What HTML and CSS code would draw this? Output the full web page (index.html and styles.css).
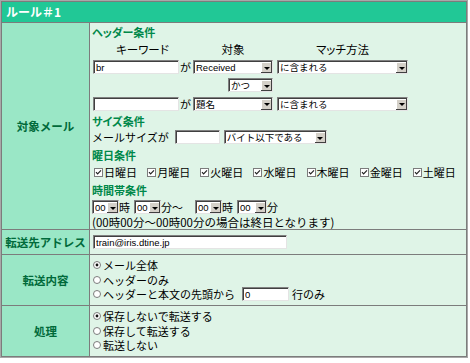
FILE: index.html
```html
<!DOCTYPE html>
<html lang="ja">
<head>
    <meta charset="UTF-8">
    <meta name="viewport" content="width=device-width, initial-scale=1.0">
    <title>ルール＃1</title>
    <link rel="stylesheet" href="styles.css">
</head>
<body>
    <table class="rule">
        <colgroup>
            <col class="col-label">
            <col class="col-body">
        </colgroup>
        <tr>
            <th class="title" colspan="2">ルール＃1</th>
        </tr>
        <tr>
            <td class="label">対象メール</td>
            <td class="body main">
                <div class="sec s1">ヘッダー条件</div>
                <div class="hrow heads">
                    <span>キーワード</span>
                    <span>対象</span>
                    <span class="c3">マッチ方法</span>
                </div>
                <div class="hrow">
                    <span class="kw"><input class="txt w86" type="text" value="br">が</span>
                    <span class="sel w80"><select><option>Received</option></select><span class="btn"><i></i></span></span>
                    <span class="sel w131 c3"><select><option>に含まれる</option></select><span class="btn"><i></i></span></span>
                </div>
                <div class="hrow">
                    <span></span>
                    <span class="andcell"><span class="sel w45"><select><option>かつ</option></select><span class="btn"><i></i></span></span></span>
                    <span></span>
                </div>
                <div class="hrow r3">
                    <span class="kw"><input class="txt w86" type="text" value="">が</span>
                    <span class="sel w80"><select><option>題名</option></select><span class="btn"><i></i></span></span>
                    <span class="sel w131 c3"><select><option>に含まれる</option></select><span class="btn"><i></i></span></span>
                </div>

                <div class="sec s2">サイズ条件</div>
                <div class="line size">
                    メールサイズが
                    <input class="txt w45" type="text" value="">
                    <span class="sel w103 gap4"><select><option>バイト以下である</option></select><span class="btn"><i></i></span></span>
                </div>

                <div class="sec s3">曜日条件</div>
                <div class="line days">
                    <span class="day"><svg class="cb" width="9" height="9" viewBox="0 0 9 9"><rect x="0.5" y="0.5" width="8" height="8" fill="#fff" stroke="#7c7c7c"/><path d="M2 4.2 L3.6 5.9 L7 2.4" fill="none" stroke="#222" stroke-width="1.2"/></svg>日曜日</span>
                    <span class="day"><svg class="cb" width="9" height="9" viewBox="0 0 9 9"><rect x="0.5" y="0.5" width="8" height="8" fill="#fff" stroke="#7c7c7c"/><path d="M2 4.2 L3.6 5.9 L7 2.4" fill="none" stroke="#222" stroke-width="1.2"/></svg>月曜日</span>
                    <span class="day"><svg class="cb" width="9" height="9" viewBox="0 0 9 9"><rect x="0.5" y="0.5" width="8" height="8" fill="#fff" stroke="#7c7c7c"/><path d="M2 4.2 L3.6 5.9 L7 2.4" fill="none" stroke="#222" stroke-width="1.2"/></svg>火曜日</span>
                    <span class="day"><svg class="cb" width="9" height="9" viewBox="0 0 9 9"><rect x="0.5" y="0.5" width="8" height="8" fill="#fff" stroke="#7c7c7c"/><path d="M2 4.2 L3.6 5.9 L7 2.4" fill="none" stroke="#222" stroke-width="1.2"/></svg>水曜日</span>
                    <span class="day"><svg class="cb" width="9" height="9" viewBox="0 0 9 9"><rect x="0.5" y="0.5" width="8" height="8" fill="#fff" stroke="#7c7c7c"/><path d="M2 4.2 L3.6 5.9 L7 2.4" fill="none" stroke="#222" stroke-width="1.2"/></svg>木曜日</span>
                    <span class="day"><svg class="cb" width="9" height="9" viewBox="0 0 9 9"><rect x="0.5" y="0.5" width="8" height="8" fill="#fff" stroke="#7c7c7c"/><path d="M2 4.2 L3.6 5.9 L7 2.4" fill="none" stroke="#222" stroke-width="1.2"/></svg>金曜日</span>
                    <span class="day"><svg class="cb" width="9" height="9" viewBox="0 0 9 9"><rect x="0.5" y="0.5" width="8" height="8" fill="#fff" stroke="#7c7c7c"/><path d="M2 4.2 L3.6 5.9 L7 2.4" fill="none" stroke="#222" stroke-width="1.2"/></svg>土曜日</span>
                </div>

                <div class="sec s4">時間帯条件</div>
                <div class="line time">
                    <span class="sel w27"><select><option>00</option></select><span class="btn"><i></i></span></span>時
                    <span class="sel w27 gap4"><select><option>00</option></select><span class="btn"><i></i></span></span>分〜
                    <span class="sel w27 gap12"><select><option>00</option></select><span class="btn"><i></i></span></span>時
                    <span class="sel w30 gap4"><select><option>00</option></select><span class="btn"><i></i></span></span>分
                </div>
                <div class="note">(00時00分〜00時00分の場合は終日となります)</div>
            </td>
        </tr>
        <tr>
            <td class="label">転送先アドレス</td>
            <td class="body addr">
                <input class="txt w194" type="text" value="train@iris.dtine.jp">
            </td>
        </tr>
        <tr>
            <td class="label">転送内容</td>
            <td class="body radios">
                <div class="opt"><svg class="rd" width="8" height="8" viewBox="0 0 8 8"><circle cx="4" cy="4" r="3.5" fill="#fff" stroke="#7c7c7c"/><circle cx="4" cy="4" r="1.4" fill="#111"/></svg>メール全体</div>
                <div class="opt"><svg class="rd" width="8" height="8" viewBox="0 0 8 8"><circle cx="4" cy="4" r="3.5" fill="#fff" stroke="#7c7c7c"/></svg>ヘッダーのみ</div>
                <div class="opt"><svg class="rd" width="8" height="8" viewBox="0 0 8 8"><circle cx="4" cy="4" r="3.5" fill="#fff" stroke="#7c7c7c"/></svg>ヘッダーと本文の先頭から<input class="txt w47" type="text" value="0"><span class="after">行のみ</span></div>
            </td>
        </tr>
        <tr>
            <td class="label">処理</td>
            <td class="body radios">
                <div class="opt"><svg class="rd" width="8" height="8" viewBox="0 0 8 8"><circle cx="4" cy="4" r="3.5" fill="#fff" stroke="#7c7c7c"/><circle cx="4" cy="4" r="1.4" fill="#111"/></svg>保存しないで転送する</div>
                <div class="opt"><svg class="rd" width="8" height="8" viewBox="0 0 8 8"><circle cx="4" cy="4" r="3.5" fill="#fff" stroke="#7c7c7c"/></svg>保存して転送する</div>
                <div class="opt"><svg class="rd" width="8" height="8" viewBox="0 0 8 8"><circle cx="4" cy="4" r="3.5" fill="#fff" stroke="#7c7c7c"/></svg>転送しない</div>
            </td>
        </tr>
    </table>
</body>
</html>
```

FILE: styles.css
```css
body {
    margin: 0;
    background-color: #fff;
    font-family: "Noto Sans CJK JP", sans-serif;
    font-size: 11px;
    color: #000;
}

.rule {
    border-collapse: separate;
    border-spacing: 1px;
    border: 1px solid #a8a8a8;
    background-color: #7c7c7c;
    width: 468px;
    table-layout: fixed;
}

.col-label {
    width: 87px;
}

.col-body {
    width: 376px;
}

.rule th,
.rule td {
    padding: 0;
}

.title {
    height: 20px;
    background-color: #21c896;
    color: #fff;
    font-size: 12px;
    font-weight: bold;
    text-align: left;
    padding-left: 4px !important;
    line-height: 20px;
}

.label {
    background-color: #9ae7c6;
    color: #006a3a;
    font-size: 11.5px;
    font-weight: bold;
    text-align: center;
    vertical-align: middle;
    white-space: nowrap;
}

.body {
    background-color: #dff4e7;
    padding-left: 2px !important;
    vertical-align: top;
    white-space: nowrap;
}

.main {
    height: 206px;
}

.sec {
    color: #00884a;
    font-weight: bold;
    font-size: 11px;
    font-feature-settings: "palt";
    display: flex;
    align-items: center;
}

.s1 { height: 17px; }
.s2 { height: 15px; }
.s3 { height: 17px; }
.s4 { height: 17px; }

.hrow {
    display: grid;
    grid-template-columns: 101px 80px 135px;
    align-items: center;
    height: 18px;
}

.hrow.r3 {
    height: 19px;
}

.hrow .c3 {
    justify-self: end;
}

.heads span {
    text-align: center;
    font-size: 11.5px;
    font-feature-settings: "palt";
}

.heads .c3 {
    justify-self: stretch;
    padding-left: 4px;
}

.kw {
    display: flex;
    align-items: center;
}

.kw .txt {
    margin-left: 1px;
    margin-right: 1px;
}

.andcell {
    display: flex;
    justify-content: flex-end;
}

.line {
    display: flex;
    align-items: center;
    height: 18px;
}

.time {
    line-height: 13px;
}

.note {
    height: 12px;
    line-height: 12px;
    font-size: 11.5px;
}

/* form controls, classic inset look */
.txt,
.sel {
    box-sizing: border-box;
    height: 14px;
    background-color: #fff;
    border: 1px solid;
    border-color: #808080 #e4e4e4 #e4e4e4 #808080;
    box-shadow: inset 1px 1px 0 #404040;
}

.txt {
    padding: 1px 0 0 2px;
    font-family: "Liberation Sans", "Noto Sans CJK JP", sans-serif;
    font-size: 9.5px;
    color: #000;
    outline: none;
}

.sel {
    display: inline-flex;
    padding: 1px 0 0 1px;
}

.sel select {
    appearance: none;
    -webkit-appearance: none;
    border: 0;
    background: transparent;
    flex: 1;
    min-width: 0;
    height: 100%;
    padding: 0 0 0 1px;
    font-family: "Liberation Sans", "Noto Sans CJK JP", sans-serif;
    font-size: 9.5px;
    color: #000;
    outline: none;
}

.btn {
    width: 11px;
    height: 11px;
    background-color: #d4d0c8;
    box-shadow: inset -1px -1px 0 #404040, inset 1px 1px 0 #fff;
    display: flex;
    align-items: center;
    justify-content: center;
    flex-shrink: 0;
}

.btn i {
    width: 0;
    height: 0;
    border-left: 3px solid transparent;
    border-right: 3px solid transparent;
    border-top: 3px solid #000;
    margin-top: 1px;
}

.w27 { width: 27px; }
.w30 { width: 30px; }
.w45 { width: 45px; }
.w47 { width: 47px; }
.w80 { width: 80px; }
.w86 { width: 86px; }
.w103 { width: 103px; }
.w131 { width: 131px; }
.w194 { width: 194px; }

.gap4 { margin-left: 4px; }
.gap12 { margin-left: 12px; }

.size .txt {
    margin-left: 6px;
}

.days {
    padding-left: 2px;
}

.day {
    display: flex;
    align-items: center;
    gap: 1px;
    width: 54px;
}

.cb {
    flex-shrink: 0;
}

.addr {
    height: 24px;
    vertical-align: middle;
}

.addr .txt {
    margin-left: 1px;
    display: block;
}

.radios {
    height: 50px;
    padding-top: 3px !important;
    box-sizing: border-box;
}

.opt {
    display: flex;
    align-items: center;
    gap: 2px;
    height: 14.5px;
    padding-left: 1px;
}

.opt .txt {
    margin-left: 5px;
}

.after {
    margin-left: 1px;
}
```
